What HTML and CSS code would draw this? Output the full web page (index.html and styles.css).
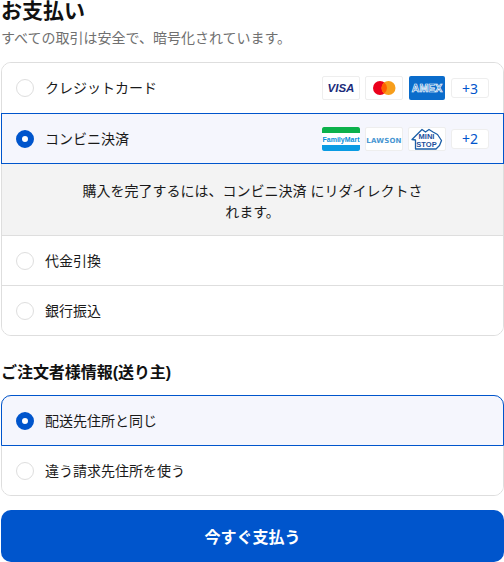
FILE: index.html
```html
<!DOCTYPE html>
<html lang="ja">
<head>
<meta charset="utf-8">
<title>お支払い</title>
<link rel="stylesheet" href="styles.css">
</head>
<body>
<main class="page">
  <h1 class="title">お支払い</h1>
  <p class="sub">すべての取引は安全で、暗号化されています。</p>

  <div class="box">
    <div class="row row-first">
      <span class="radio"></span><span class="label">クレジットカード</span>
      <div class="logos">
        <span class="logo"><svg viewBox="0 0 36 22"><text x="18" y="15" class="t-visa" text-anchor="middle">VISA</text></svg></span>
        <span class="logo"><svg viewBox="0 0 36 22"><circle cx="14" cy="11" r="7" fill="#eb001b"/><circle cx="22.500" cy="11" r="7" fill="#f79e1b"/><path d="M18.250 5.450a7 7 0 0 1 0 11.100a7 7 0 0 1 0-11.100z" fill="#ff5f00"/></svg></span>
        <span class="logo logo-amex"><svg viewBox="0 0 36 24"><text x="18" y="15.500" class="t-amex" text-anchor="middle">AMEX</text></svg></span>
        <span class="more">+3</span>
      </div>
    </div>
    <div class="row selected">
      <span class="radio on"></span><span class="label">コンビニ決済</span>
      <div class="logos">
        <span class="logo logo-fm"><svg viewBox="0 0 38 24"><path d="M1 0h36a1 1 0 0 1 1 1v5H0V1a1 1 0 0 1 1-1z" fill="#0cb14b"/><rect width="38" height="12" y="6" fill="#fff"/><path d="M0 18h38v5a1 1 0 0 1-1 1H1a1 1 0 0 1-1-1z" fill="#0a9be3"/><text x="19" y="14.800" class="t-fm" text-anchor="middle">FamilyMart</text></svg></span>
        <span class="logo"><svg viewBox="0 0 36 22"><text x="18" y="14.500" class="t-lawson" text-anchor="middle">LAWSON</text></svg></span>
        <span class="logo"><svg viewBox="0 0 36 22"><path d="M3 11.500 13 1.500l3.500 2.500 3.500-2.500 4 2.500 4.500 2.500 4 6-2 5-3.500 3.500H6.500v-9z" fill="#fff" stroke="#1b5fa8" stroke-width="1.300" stroke-linejoin="round"/><text x="17.500" y="10.500" class="t-mini" text-anchor="middle">MINI</text><text x="17.500" y="18.500" class="t-mini" text-anchor="middle">STOP</text></svg></span>
        <span class="more">+2</span>
      </div>
    </div>
    <div class="info">購入を完了するには、コンビニ決済 にリダイレクトされます。</div>
    <div class="row row-plain"><span class="radio"></span><span class="label">代金引換</span></div>
    <div class="row row-plain"><span class="radio"></span><span class="label">銀行振込</span></div>
  </div>

  <h2 class="heading">ご注文者様情報(送り主)</h2>

  <div class="box">
    <div class="row selected selected-top">
      <span class="radio on"></span><span class="label">配送先住所と同じ</span>
    </div>
    <div class="row row-last"><span class="radio"></span><span class="label">違う請求先住所を使う</span></div>
  </div>

  <button class="pay" type="button">今すぐ支払う</button>
</main>
</body>
</html>
```

FILE: styles.css
```css
* { box-sizing: border-box; }
html, body { margin: 0; padding: 0; background: #fff; }
body {
  font-family: "Liberation Sans", "Noto Sans CJK JP", sans-serif;
  color: #1a1a1a;
  width: 504px;
  height: 562px;
  overflow: hidden;
}
.page { padding-left: 1px; display: flex; flex-direction: column; }
.title { margin: 0; font-size: 21px; line-height: 22px; font-weight: 700; color: #111; height: 28px; }
.sub { margin: 0; font-size: 14px; line-height: 20px; color: #707070; height: 34px; }
.box { border: 1px solid #dedede; border-radius: 10px; display: flex; flex-direction: column; }
.row { display: flex; align-items: center; height: 50px; padding: 0 14px; background: #fff; }
.row-first { border-radius: 9px 9px 0 0; }
.row-plain { border-top: 1px solid #dedede; }
.row-plain:last-child, .row-last { border-radius: 0 0 9px 9px; }
.row-last { height: 49px; }
.selected {
  background: #f5f6fd;
  border: 1px solid #0055cc;
  margin: 0 -1px;
  height: 51px;
}
.selected-top { border-radius: 10px 10px 0 0; margin-top: -1px; }
.radio { width: 18px; height: 18px; border-radius: 50%; border: 1px solid #dedede; background: #fff; flex: none; }
.radio.on { border: 6px solid #0055cc; }
.label { margin-left: 11px; font-size: 14px; line-height: 20px; color: #1a1a1a; }
.logos { margin-left: auto; display: flex; align-items: center; gap: 5px; }
.logo { width: 38px; height: 24px; background: #fff; border: 1px solid #eeeeee; border-radius: 2px; display: block; overflow: hidden; }
.logo svg { display: block; width: 100%; height: 100%; }
.logo-amex { background: #0a6ccb; border: 0; width: 36px; margin: 0 1px; }
.logo-fm { border: 0; }
.t-visa { font: italic 700 11.500px "Liberation Sans", sans-serif; fill: #1a2b7a; }
.t-amex { font: 700 10.500px "Liberation Sans", sans-serif; fill: #0a6ccb; stroke: #fff; stroke-width: .7px; }
.t-fm { font: 700 7px "Liberation Sans", sans-serif; fill: #0a8fd8; }
.t-lawson { font: 700 7px "DejaVu Sans", sans-serif; fill: #4a97d2; letter-spacing: .2px; }
.t-mini { font: 700 7.500px "Liberation Sans", sans-serif; fill: #1b4f9c; }
.more {
  width: 38px; height: 20px; background: #fff; border: 1px solid #eeeeee; border-radius: 3px;
  display: flex; align-items: center; justify-content: center;
  font: 400 14px "Noto Sans", sans-serif; color: #0055cc;
}
.info {
  height: 71px; background: #f3f3f3; padding: 17px 78px 0;
  text-align: center; font-size: 14px; line-height: 21px; color: #1a1a1a;
}
.heading { margin: 24px 0 0; font-size: 16px; line-height: 26px; height: 35px; font-weight: 700; color: #111; letter-spacing: -.05px; }
.pay {
  margin-top: 14px; height: 52px; width: 503px; border: 0; border-radius: 10px;
  background: #0055cc; color: #fff; font: 700 16px "Liberation Sans", "Noto Sans CJK JP", sans-serif;
}
```
